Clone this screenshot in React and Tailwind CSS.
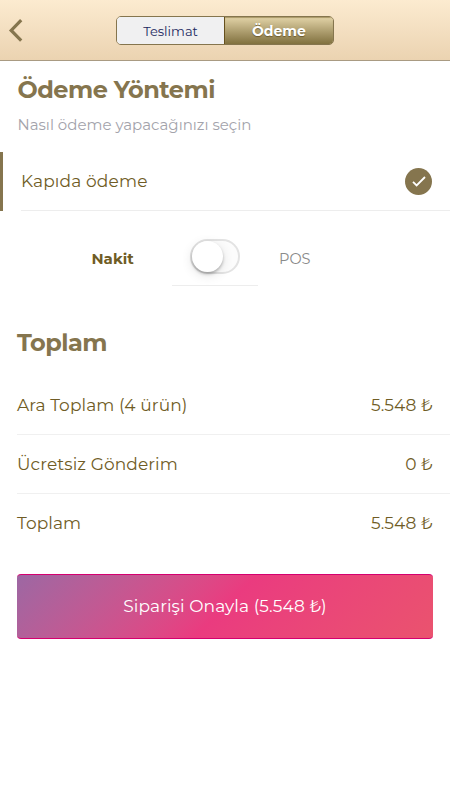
const TOTALS = [
  { label: 'Ara Toplam (4 ürün)', amount: '5.548 ₺' },
  { label: 'Ücretsiz Gönderim', amount: '0 ₺' },
  { label: 'Toplam', amount: '5.548 ₺' },
];

const Header = () => (
  <header className="flex h-[61px] items-center border-b border-[#a99b83] bg-linear-to-b from-[#fcebd0] to-[#ebd3b1] pl-2">
    <button aria-label="Geri" className="w-[108px]">
      <svg width="16" height="24" viewBox="0 0 16 24" fill="none" stroke="#85754e" strokeWidth="3.2">
        <path d="M13.2 2.2L3.2 12.4L13.2 22.6" />
      </svg>
    </button>
    <div className="flex h-[29px] w-[218px] overflow-hidden rounded-[5px] border border-[#85754e]">
      <button className="w-[107px] bg-[#f0f0f1] pt-[3px] text-[13px] text-[#22285f]">
        Teslimat
      </button>
      <button className="flex-1 border-l border-[#65501e] bg-linear-to-b from-[#e3d4a8] to-[#81713f] pt-px text-sm font-bold text-white shadow-[inset_0_1px_1px_#a99766] text-shadow-[0_1px_1px_#6b5a30]">
        Ödeme
      </button>
    </div>
  </header>
);

const App = () => {
  return (
    <div className="min-h-screen bg-white font-['Montserrat','Inter',sans-serif] text-[#6f5c25]">
      <Header />

      {/* Payment method */}
      <section>
        <h1 className="pl-[17.5px] pt-[13px] text-2xl leading-8 font-bold tracking-[-0.5px] text-[#85754e]">
          Ödeme Yöntemi
        </h1>
        <p className="mt-[9px] pl-[17.5px] text-[15px] leading-5 text-[#a3a3ab]">
          Nasıl ödeme yapacağınızı seçin
        </p>

        <div className="mt-[17px] h-[59px] border-l-3 border-[#85754e] pl-[18px]">
          <div className="flex h-full items-center justify-between border-b border-[#ededed] pr-[18px]">
            <span className="pt-0.5 text-[17px] tracking-[0.15px]">Kapıda ödeme</span>
            <span className="flex size-[27px] items-center justify-center rounded-full bg-[#85754e]">
              <svg width="14" height="11" viewBox="0 0 14 11" fill="none" stroke="white" strokeWidth="1.8">
                <path d="M1 5.8L4.6 9.4L13 1" />
              </svg>
            </span>
          </div>
        </div>

        <div className="flex h-[75px]">
          <span className="w-[172px] pl-[91.5px] pt-[38px] text-[15px] leading-5 font-bold">Nakit</span>
          <div className="w-[86px] border-b border-[#ededed] pl-[18px] pt-[28px]">
            <button
              role="switch"
              aria-checked="false"
              aria-label="POS"
              className="block h-[35px] w-[50px] rounded-full border-2 border-[#e3e3e3] bg-[#fcfcfc]"
            >
              <span className="block size-[31px] rounded-full bg-white shadow-[0_2px_3px_rgba(0,0,0,0.25),0_3px_12px_rgba(0,0,0,0.12)]" />
            </button>
          </div>
          <span className="pl-[21px] pt-[38px] text-[14.5px] leading-5 text-[#8a8a8a]">POS</span>
        </div>
      </section>

      {/* Order total */}
      <section className="pt-[41px] pl-[17px]">
        <h2 className="text-2xl leading-8 font-bold tracking-[-0.5px] text-[#85754e]">Toplam</h2>
        <div className="mt-[17px]">
          {TOTALS.map((row) => (
            <div
              key={row.label}
              className="flex h-[59px] items-center justify-between border-b border-[#f0f0f0] pt-px pr-[17px] text-[17px] tracking-[0.1px] last:border-0"
            >
              <span>{row.label}</span>
              <span>{row.amount}</span>
            </div>
          ))}
        </div>
        <button className="mt-[21px] h-[65px] w-[416px] rounded-[4px] border-y border-[#d5006f] bg-linear-135 from-[#9c67a3] via-[#ea3b7f] to-[#ea536e] text-[17px] tracking-[0.1px] text-white">
          Siparişi Onayla (5.548 ₺)
        </button>
      </section>
    </div>
  );
};

export default App;
